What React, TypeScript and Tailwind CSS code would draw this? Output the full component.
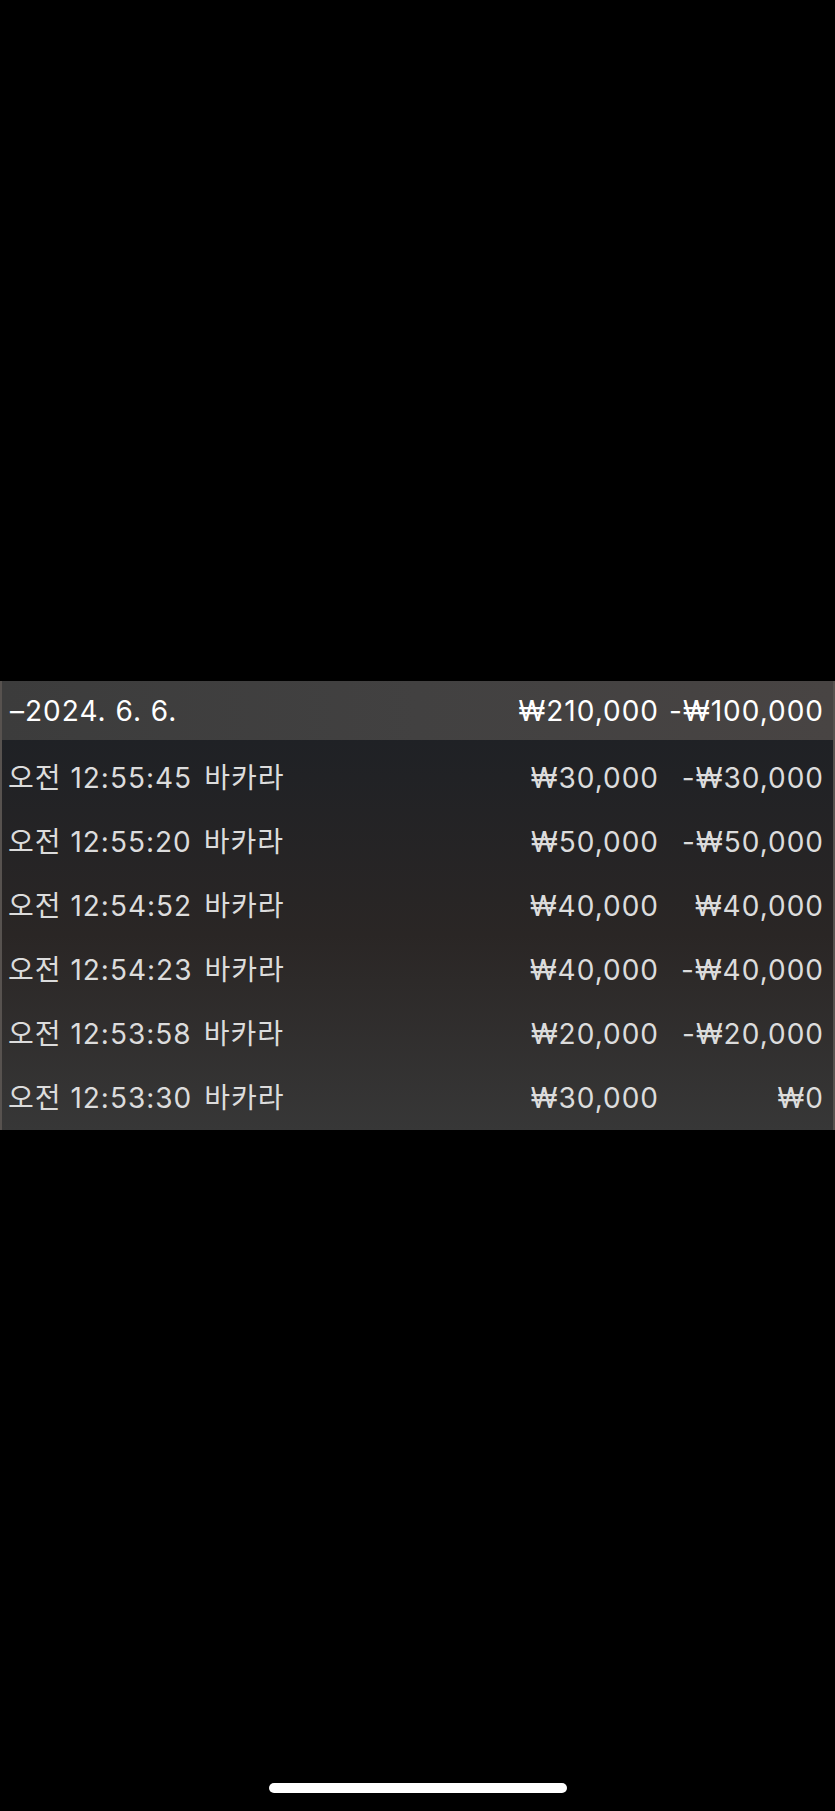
const rows = [
  { time: "오전 12:55:45", game: "바카라", bet: "₩30,000", result: "-₩30,000" },
  { time: "오전 12:55:20", game: "바카라", bet: "₩50,000", result: "-₩50,000" },
  { time: "오전 12:54:52", game: "바카라", bet: "₩40,000", result: "₩40,000" },
  { time: "오전 12:54:23", game: "바카라", bet: "₩40,000", result: "-₩40,000" },
  { time: "오전 12:53:58", game: "바카라", bet: "₩20,000", result: "-₩20,000" },
  { time: "오전 12:53:30", game: "바카라", bet: "₩30,000", result: "₩0" },
];

export default function App() {
  return (
    <div
      className="w-[835px] h-[1811px] bg-black flex flex-col"
      style={{ fontFamily: 'Inter, "Noto Sans CJK KR", sans-serif' }}
    >
      <div className="h-[681px]" />

      {/* history table */}
      <div className="flex flex-col border-x-2 border-[#57524f] tracking-[1px]">
        {/* date header */}
        <div className="h-[59px] flex items-center pl-2 pr-[9px] bg-gradient-to-r from-[#3c3c3c] via-[#424141] to-[#484443] text-white text-[28px]">
          <span className="flex-1">–2024. 6. 6.</span>
          <span className="w-[150px] text-right">₩210,000</span>
          <span className="w-[165px] text-right">-₩100,000</span>
        </div>

        {/* game rows */}
        <div className="flex flex-col pt-[6px] bg-gradient-to-b from-[#1f2125] via-[#2a2625] to-[#373737] text-[#dcdcdc] text-[28px]">
          {rows.map((r) => (
            <div key={r.time} className="h-[64px] flex items-center pl-[6px] pr-[9px]">
              <span className="flex-1 flex">
                <span>{r.time}</span>
                <span className="ml-[12px]">{r.game}</span>
              </span>
              <span className="w-[150px] text-right">{r.bet}</span>
              <span className="w-[165px] text-right">{r.result}</span>
            </div>
          ))}
        </div>
      </div>

      <div className="flex-1" />

      {/* home indicator */}
      <div className="flex justify-center pb-[18px]">
        <div className="w-[298px] h-[10px] rounded-full bg-white" />
      </div>
    </div>
  );
}
